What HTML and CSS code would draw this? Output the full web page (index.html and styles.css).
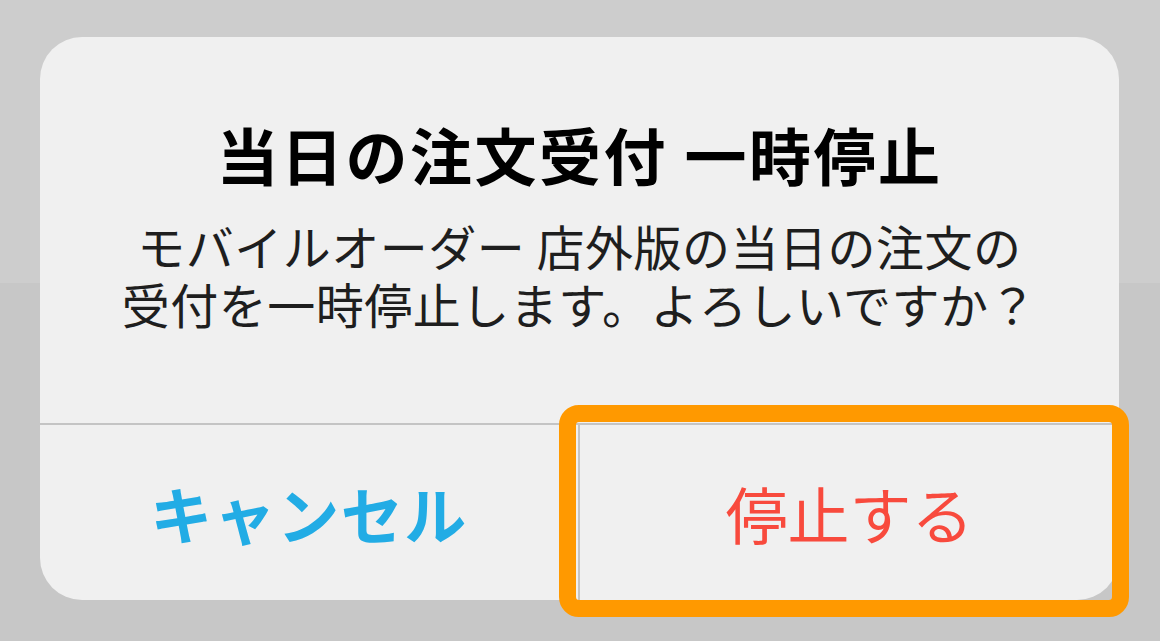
FILE: index.html
```html
<!DOCTYPE html>
<html lang="ja">
<head>
<meta charset="utf-8">
<link rel="stylesheet" href="styles.css">
</head>
<body>
<div class="screen">
  <div class="dialog">
    <div class="content">
      <div class="title">当日の注文受付 一時停止</div>
      <div class="message">モバイルオーダー 店外版の当日の注文の<br>受付を一時停止します。よろしいですか？</div>
    </div>
    <div class="actions">
      <div class="btn cancel">キャンセル</div>
      <div class="btn stop">停止する<span class="highlight"></span></div>
    </div>
  </div>
</div>
</body>
</html>
```

FILE: styles.css
```css
html, body {
  margin: 0;
  padding: 0;
}
body {
  width: 1160px;
  height: 641px;
  overflow: hidden;
  background: linear-gradient(to bottom, #cdcdcd 0, #cdcdcd 283px, #c7c7c7 283px, #c7c7c7 100%);
  font-family: "Noto Sans CJK JP", "Noto Sans", sans-serif;
}
.screen {
  padding: 37px 0 0 40px;
}
.dialog {
  width: 1079px;
  height: 563px;
  background: #f0f0f0;
  border-radius: 42px;
  display: flex;
  flex-direction: column;
}
.content {
  height: 306px;
  padding-top: 80px;
  display: flex;
  flex-direction: column;
  align-items: center;
  border-bottom: 2px solid #c4c4c4;
}
.title {
  font-size: 62px;
  line-height: 74px;
  font-weight: 700;
  letter-spacing: 2.5px;
  color: #000;
  white-space: nowrap;
}
.message {
  margin-top: 25px;
  font-size: 48px;
  line-height: 58px;
  letter-spacing: 0.5px;
  color: #1e1e1e;
  text-align: center;
  white-space: nowrap;
}
.actions {
  flex: 1;
  display: flex;
}
.btn {
  display: flex;
  align-items: center;
  justify-content: center;
  font-size: 62px;
  white-space: nowrap;
}
.cancel {
  width: 538px;
  border-right: 2px solid #c4c4c4;
  color: #22ace5;
  font-weight: 700;
  letter-spacing: 1.5px;
}
.stop {
  flex: 1;
  color: #f84a3d;
  position: relative;
}
.highlight {
  position: absolute;
  left: -21px;
  top: -20px;
  right: -10px;
  bottom: -17px;
  border: 17px solid #ff9900;
  border-radius: 20px;
  box-sizing: border-box;
}
```
